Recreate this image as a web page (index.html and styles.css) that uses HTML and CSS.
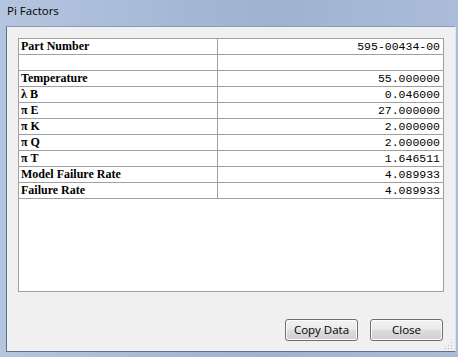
FILE: index.html
```html
<!DOCTYPE html>
<html>
<head>
<meta charset="utf-8">
<link rel="stylesheet" href="styles.css">
</head>
<body>
<div class="window">
  <div class="titlebar"><span class="title">Pi Factors</span></div>
  <div class="client">
    <div class="gridbox">
      <table class="grid">
        <tr><td class="lbl">Part Number</td><td class="val">595-00434-00</td></tr>
        <tr><td class="lbl"></td><td class="val"></td></tr>
        <tr><td class="lbl">Temperature</td><td class="val">55.000000</td></tr>
        <tr><td class="lbl">λ B</td><td class="val">0.046000</td></tr>
        <tr><td class="lbl">π E</td><td class="val">27.000000</td></tr>
        <tr><td class="lbl">π K</td><td class="val">2.000000</td></tr>
        <tr><td class="lbl">π Q</td><td class="val">2.000000</td></tr>
        <tr><td class="lbl">π T</td><td class="val">1.646511</td></tr>
        <tr><td class="lbl">Model Failure Rate</td><td class="val">4.089933</td></tr>
        <tr><td class="lbl">Failure Rate</td><td class="val">4.089933</td></tr>
      </table>
    </div>
    <div class="buttons">
      <button class="btn">Copy Data</button>
      <button class="btn">Close</button>
    </div>
    <svg class="grip" width="9" height="9" viewBox="0 0 9 9">
      <rect x="7" y="1" width="1" height="1" fill="#b5b5b5"/>
      <rect x="4" y="4" width="1" height="1" fill="#b5b5b5"/>
      <rect x="7" y="4" width="1" height="1" fill="#b5b5b5"/>
      <rect x="1" y="7" width="1" height="1" fill="#b5b5b5"/>
      <rect x="4" y="7" width="1" height="1" fill="#b5b5b5"/>
      <rect x="7" y="7" width="1" height="1" fill="#b5b5b5"/>
    </svg>
  </div>
</div>
</body>
</html>
```
FILE: styles.css
```css
html, body {
  margin: 0;
  padding: 0;
}
body {
  width: 458px;
  height: 357px;
  overflow: hidden;
}
.window {
  width: 458px;
  height: 357px;
  box-sizing: border-box;
  background: linear-gradient(to right, #b4c5df 0%, #a4b8d5 40%, #9fb3d1 60%, #aabcd8 100%);
  display: flex;
  flex-direction: column;
  padding: 0 2px 5px 6px;
}
.titlebar {
  height: 26px;
  flex: none;
  display: flex;
  align-items: flex-start;
}
.title {
  font-family: "Open Sans", "Noto Sans", sans-serif;
  font-size: 11.5px;
  color: #000;
  margin: 3px 0 0 1px;
  letter-spacing: 0;
}
.client {
  flex: 1;
  position: relative;
  background: #f0f0f0;
  border: 1px solid #5e6f8a;
  border-top-color: #8a9bb5;
  border-right-color: #dde5f0;
  padding: 11px 11px 0 11px;
  display: flex;
  flex-direction: column;
}
.gridbox {
  height: 252px;
  background: #fff;
  border: 1px solid #a0a0a0;
  flex: none;
}
.grid {
  width: 100%;
  border-collapse: collapse;
  border-spacing: 0;
  table-layout: fixed;
}
.grid td {
  height: 15px;
  padding: 0;
  border-bottom: 1px solid #a0a0a0;
  line-height: 15px;
  white-space: nowrap;
  overflow: hidden;
}
.grid .lbl {
  width: 196px;
  padding-left: 2px;
  border-right: 1px solid #a0a0a0;
  font-family: "Liberation Serif", "Times New Roman", serif;
  font-weight: bold;
  font-size: 12px;
  color: #000;
}
.grid .val {
  text-align: right;
  padding-right: 3px;
  font-family: "Liberation Mono", "Courier New", monospace;
  font-size: 11.5px;
  color: #000;
}
.buttons {
  display: flex;
  justify-content: flex-end;
  gap: 12px;
  margin-top: 27px;
  padding-right: 1px;
}
.btn {
  width: 73px;
  height: 22px;
  box-sizing: border-box;
  border: 1px solid #707070;
  border-radius: 3px;
  background: linear-gradient(to bottom, #f2f2f2 0%, #ebebeb 45%, #dddddd 50%, #cfcfcf 100%);
  box-shadow: inset 0 0 0 1px #fcfcfc;
  font-family: "Open Sans", "Noto Sans", sans-serif;
  font-size: 11.5px;
  color: #000;
  padding: 0;
  line-height: 18px;
}
.grip {
  position: absolute;
  right: 2px;
  bottom: 1px;
}
```
